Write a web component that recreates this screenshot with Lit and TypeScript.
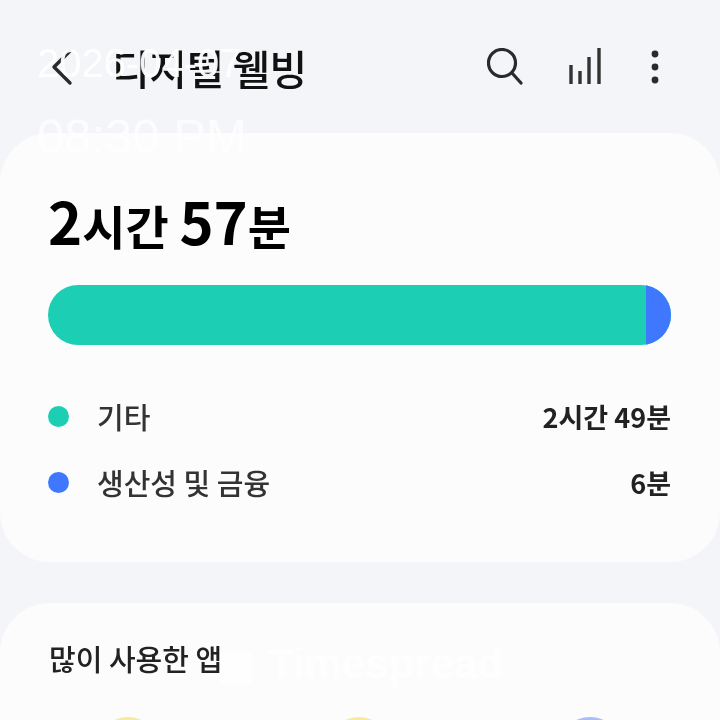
import { LitElement, html, css } from 'lit'
import { customElement } from 'lit/decorators.js'

type Usage = { label: string; time: string; color: string }

const usages: Usage[] = [
  { label: '기타', time: '2시간 49분', color: '#1ccfb4' },
  { label: '생산성 및 금융', time: '6분', color: '#3f78ff' },
]

const apps = ['#f8e9a0', '#f8e9a0', '#a9bdf7']

@customElement('app-root')
export class AppRoot extends LitElement {
  static styles = css`
    :host {
      display: block;
      position: relative;
      width: 720px;
      height: 720px;
      overflow: hidden;
      background: #f4f5f8;
      font-family: 'Noto Sans CJK KR', 'Noto Sans', sans-serif;
      color: #111;
    }

    .screen {
      filter: blur(0.6px);
    }

    .header {
      display: flex;
      align-items: center;
      height: 133px;
      padding: 0 60px 0 46px;
      box-sizing: border-box;
    }

    .back {
      width: 30px;
      height: 40px;
      margin-right: 36px;
    }

    .title {
      flex: 1;
      font-size: 41px;
      font-weight: 500;
      letter-spacing: -0.5px;
      line-height: 1;
      margin-top: 2px;
    }

    .actions {
      display: flex;
      align-items: center;
    }

    .search {
      margin-right: 45px;
    }

    .stats {
      margin-right: 49px;
    }

    .card {
      background: #fcfcfc;
      border-radius: 50px;
      padding: 0 49px 0 48px;
    }

    .summary {
      height: 429px;
      box-sizing: border-box;
      padding-top: 53px;
      margin-bottom: 41px;
    }

    .total {
      height: 68px;
      line-height: 68px;
      font-size: 47px;
      font-weight: 700;
      color: #000;
    }

    .total b {
      font-size: 58px;
      font-weight: 700;
    }

    .bar {
      display: flex;
      height: 60px;
      margin-top: 31px;
      border-radius: 30px;
      overflow: hidden;
      background: #1ccfb4;
    }

    .bar .rest {
      flex: 1;
    }

    .bar .prod {
      width: 25px;
      background: #3f78ff;
    }

    .rows {
      display: flex;
      flex-direction: column;
      gap: 26px;
      margin-top: 51px;
    }

    .row {
      display: flex;
      align-items: center;
      height: 40px;
      font-size: 29px;
      font-weight: 500;
      color: #333;
    }

    .dot {
      width: 21px;
      height: 21px;
      border-radius: 50%;
      margin-right: 28px;
    }

    .label {
      flex: 1;
    }

    .time {
      font-size: 27px;
      font-weight: 700;
      color: #222;
    }

    .apps {
      height: 200px;
      box-sizing: border-box;
      padding-top: 35px;
    }

    .apps h2 {
      margin: 0 0 0 1px;
      font-size: 29px;
      font-weight: 500;
      line-height: 40px;
      color: #222;
    }

    .icons {
      display: flex;
      gap: 169px;
      margin: 39px 0 0 49px;
    }

    .icons span {
      width: 62px;
      height: 62px;
      border-radius: 50%;
    }

    .stamp {
      position: absolute;
      left: 37px;
      color: #fff;
      font-family: 'Liberation Sans', Arial, sans-serif;
      font-size: 40px;
      line-height: 44px;
      white-space: nowrap;
    }

    .date {
      top: 41px;
      opacity: 0.95;
    }

    .clock {
      top: 111px;
      font-size: 49px;
      line-height: 50px;
      opacity: 0.75;
    }

    .mark {
      position: absolute;
      left: 220px;
      top: 642px;
      display: flex;
      align-items: center;
      gap: 16px;
      color: #fff;
      font-family: 'Liberation Sans', Arial, sans-serif;
      font-size: 42px;
      font-weight: 700;
      line-height: 44px;
      opacity: 0.75;
    }

    .mark i {
      width: 32px;
      height: 30px;
      margin-top: 8px;
      background: #fff;
    }
  `

  render() {
    return html`
      <div class="screen">
        <div class="header">
          <svg class="back" viewBox="0 0 30 40" fill="none" stroke="#2a2a2c" stroke-width="3.4" stroke-linecap="round" stroke-linejoin="round">
            <path d="M24 4 L8 20 L24 36" />
          </svg>
          <div class="title">디지털 웰빙</div>
          <div class="actions">
            <svg class="search" width="36" height="37" viewBox="0 0 36 37" fill="none" stroke="#2a2a2c" stroke-width="3.2" stroke-linecap="round">
              <circle cx="15" cy="15" r="13.5" />
              <path d="M25 25 L34 35" />
            </svg>
            <svg class="stats" width="33" height="37" viewBox="0 0 33 37" fill="none" stroke="#333" stroke-width="3.4">
              <path d="M3 17 V36 M12 23 V36 M21 9 V36 M31 0 V36" />
            </svg>
            <svg width="10" height="34" viewBox="0 0 10 34" fill="#2a2a2c">
              <circle cx="5" cy="4" r="3.4" />
              <circle cx="5" cy="17" r="3.4" />
              <circle cx="5" cy="30" r="3.4" />
            </svg>
          </div>
        </div>

        <section class="card summary">
          <div class="total"><b>2</b>시간 <b>57</b>분</div>
          <div class="bar">
            <div class="rest"></div>
            <div class="prod"></div>
          </div>
          <div class="rows">
            ${usages.map(
              (u) => html`
                <div class="row">
                  <span class="dot" style="background:${u.color}"></span>
                  <span class="label">${u.label}</span>
                  <span class="time">${u.time}</span>
                </div>
              `,
            )}
          </div>
        </section>

        <section class="card apps">
          <h2>많이 사용한 앱</h2>
          <div class="icons">
            ${apps.map((c) => html`<span style="background:${c}"></span>`)}
          </div>
        </section>
      </div>

      <div class="stamp date">2026-04-07</div>
      <div class="stamp clock">08:30 PM</div>
      <div class="mark"><i></i><span>Timespread</span></div>
    `
  }
}
